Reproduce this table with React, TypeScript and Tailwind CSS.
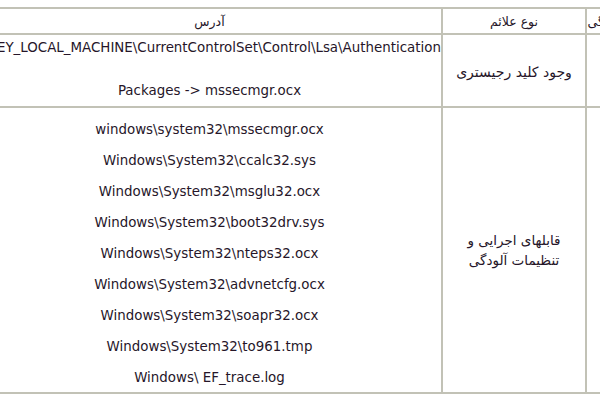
const paths = [
  'windows\\system32\\mssecmgr.ocx',
  'Windows\\System32\\ccalc32.sys',
  'Windows\\System32\\msglu32.ocx',
  'Windows\\System32\\boot32drv.sys',
  'Windows\\System32\\nteps32.ocx',
  'Windows\\System32\\advnetcfg.ocx',
  'Windows\\System32\\soapr32.ocx',
  'Windows\\System32\\to961.tmp',
  'Windows\\ EF_trace.log',
]

export default function App() {
  return (
    <div
      className="w-[600px] h-[400px] overflow-hidden bg-white text-[#261629]"
      style={{ fontFamily: '"DejaVu Sans", "Noto Sans", sans-serif' }}
    >
      <div className="pt-[7px] ml-[-24px]">
        <div className="grid w-max grid-cols-[463px_142px_34px] grid-rows-[24px_71px_284px] gap-[2px] p-[2px] bg-[#c2c2b6]">
          {/* header */}
          <div dir="rtl" className="bg-white flex items-center justify-center pt-[2px] text-[12.5px]">
            آدرس
          </div>
          <div dir="rtl" className="bg-white flex items-center justify-center pt-[2px] text-[12.5px]">
            نوع علائم
          </div>
          <div dir="rtl" className="bg-white flex items-center justify-center pt-[2px] text-[12.5px] whitespace-nowrap">
            ویژگی
          </div>

          {/* row 1 */}
          <div className="bg-white flex flex-col items-center pt-[2px] text-[13.4px] leading-[22px] whitespace-nowrap">
            <div>HKEY_LOCAL_MACHINE\CurrentControlSet\Control\Lsa\Authentication</div>
            <div className="h-[21px]" />
            <div>Packages -&gt; mssecmgr.ocx</div>
          </div>
          <div dir="rtl" className="bg-white flex items-center justify-center pt-[3px] text-[14px]">
            وجود کلید رجیستری
          </div>
          <div className="bg-white" />

          {/* row 2 */}
          <div className="bg-white flex flex-col items-center pt-[6px] text-[13.4px] whitespace-nowrap">
            {paths.map((p) => (
              <div key={p} className="h-[31px] leading-[31px]">
                {p}
              </div>
            ))}
          </div>
          <div dir="rtl" className="bg-white flex flex-col items-center justify-center text-[13.5px] leading-[20px]">
            <div>قابلهای اجرایی و</div>
            <div>تنظیمات آلودگی</div>
          </div>
          <div className="bg-white" />
        </div>
      </div>
    </div>
  )
}
